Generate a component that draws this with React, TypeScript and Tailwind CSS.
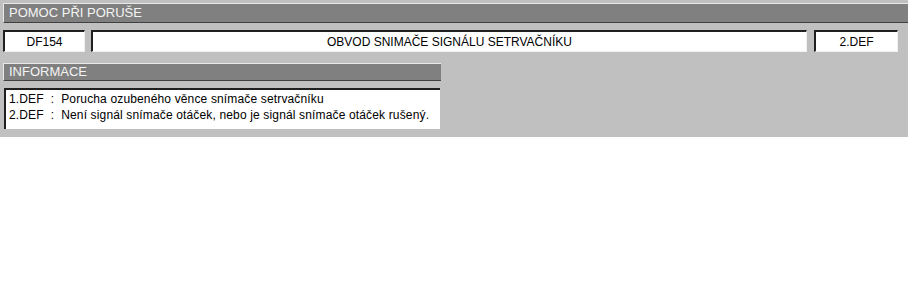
export default function App() {
  return (
    <div className="w-[908px] h-[290px] bg-white font-['Liberation_Sans',Arial,sans-serif] text-black">
      <div className="h-[137px] bg-[#c0c0c0] pt-[3px] pl-[3px]">
        <div className="h-[20px] bg-[#808080] border-t border-l border-[#e8e8e8] border-b border-b-[#404040] pl-[5px] text-[13px] leading-[17px] text-[#f4f4f4]">
          POMOC PŘI PORUŠE
        </div>

        <div className="mt-[7px] flex h-[22px] text-[12px]">
          <div className="w-[82px] flex items-center justify-center bg-white border-t-2 border-l-2 border-t-[#202020] border-l-[#202020] border-b border-r border-b-[#f0f0f0] border-r-[#f0f0f0]">
            DF154
          </div>
          <div className="ml-[6px] w-[716px] flex items-center justify-center bg-white border-t-2 border-l-2 border-t-[#202020] border-l-[#202020] border-b border-r border-b-[#f0f0f0] border-r-[#f0f0f0]">
            OBVOD SNIMAČE SIGNÁLU SETRVAČNÍKU
          </div>
          <div className="ml-[7px] w-[84px] flex items-center justify-center bg-white border-t-2 border-l-2 border-t-[#202020] border-l-[#202020] border-b border-r border-b-[#f0f0f0] border-r-[#f0f0f0]">
            2.DEF
          </div>
        </div>

        <div className="mt-[11px] w-[438px] h-[18px] bg-[#808080] border-t border-l border-[#e8e8e8] border-b border-b-[#404040] pl-[5px] text-[13px] leading-[15px] text-[#f4f4f4]">
          INFORMACE
        </div>

        <div className="mt-[7px] ml-[1px] w-[436px] h-[41px] bg-white border-t-2 border-l-2 border-[#202020] pl-[3px] pt-[1px] text-[12px] leading-[16px] tracking-[0.15px]">
          <div className="whitespace-pre">1.DEF  :  Porucha ozubeného věnce snímače setrvačníku</div>
          <div className="whitespace-pre">2.DEF  :  Není signál snímače otáček, nebo je signál snímače otáček rušený.</div>
        </div>
      </div>
    </div>
  );
}
